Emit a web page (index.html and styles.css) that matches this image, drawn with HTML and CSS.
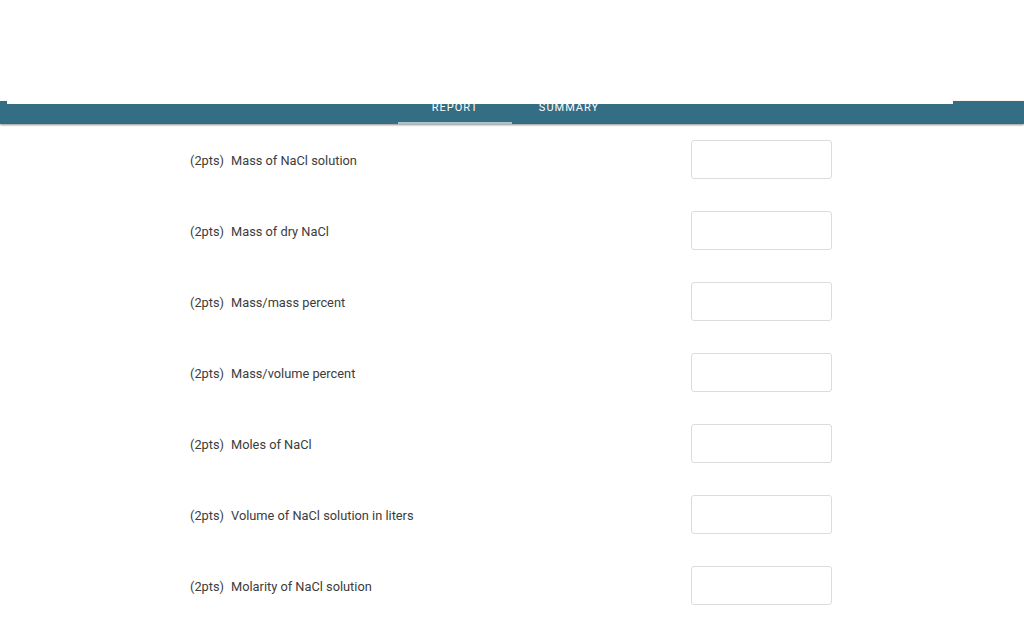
FILE: index.html
```html
<!DOCTYPE html>
<html>
<head>
<meta charset="utf-8">
<link rel="stylesheet" href="styles.css">
</head>
<body>
<div class="page">
  <div class="top"></div>
  <div class="tabbar">
    <div class="tab active">Report</div>
    <div class="tab">Summary</div>
  </div>
  <div class="mask"></div>
  <div class="form">
    <div class="row"><div class="label"><span class="pts">(2pts)</span>Mass of NaCl solution</div><input class="field" type="text"></div>
    <div class="row"><div class="label"><span class="pts">(2pts)</span>Mass of dry NaCl</div><input class="field" type="text"></div>
    <div class="row"><div class="label"><span class="pts">(2pts)</span>Mass/mass percent</div><input class="field" type="text"></div>
    <div class="row"><div class="label"><span class="pts">(2pts)</span>Mass/volume percent</div><input class="field" type="text"></div>
    <div class="row"><div class="label"><span class="pts">(2pts)</span>Moles of NaCl</div><input class="field" type="text"></div>
    <div class="row"><div class="label"><span class="pts">(2pts)</span>Volume of NaCl solution in liters</div><input class="field" type="text"></div>
    <div class="row"><div class="label"><span class="pts">(2pts)</span>Molarity of NaCl solution</div><input class="field" type="text"></div>
  </div>
</div>
</body>
</html>
```

FILE: styles.css
```css
html, body {
  margin: 0;
  padding: 0;
  background: #ffffff;
}
body {
  font-family: Roboto, "Liberation Sans", sans-serif;
  color: #3c3c3c;
}
.page {
  position: relative;
  width: 1024px;
  height: 640px;
  overflow: hidden;
}
.top {
  height: 101px;
}
.tabbar {
  height: 23px;
  background: #336e85;
  box-shadow: 0 1px 2px rgba(0, 0, 0, 0.45);
  display: flex;
  justify-content: center;
  position: relative;
  z-index: 1;
}
.tab {
  width: 114px;
  box-sizing: border-box;
  text-align: center;
  text-transform: uppercase;
  font-size: 11px;
  letter-spacing: 1px;
  color: #ffffff;
  padding-top: 1px;
  line-height: 12px;
  border-bottom: 2px solid transparent;
}
.tab.active {
  border-bottom-color: #a9c3cf;
}
.mask {
  position: absolute;
  left: 7px;
  right: 71px;
  top: 0;
  height: 104px;
  background: #ffffff;
  z-index: 2;
}
.form {
  width: 642px;
  margin: 16px 0 0 190px;
  display: flex;
  flex-direction: column;
  gap: 32px;
}
.row {
  display: flex;
  align-items: center;
  justify-content: space-between;
  height: 39px;
}
.label {
  font-size: 12.8px;
  padding-top: 2px;
}
.pts {
  margin-right: 7px;
}
.field {
  width: 141px;
  height: 39px;
  box-sizing: border-box;
  border: 1px solid #dcdcdc;
  border-radius: 3px;
  background: #fff;
  margin: 0;
  padding: 0 8px;
  outline: none;
}
```
